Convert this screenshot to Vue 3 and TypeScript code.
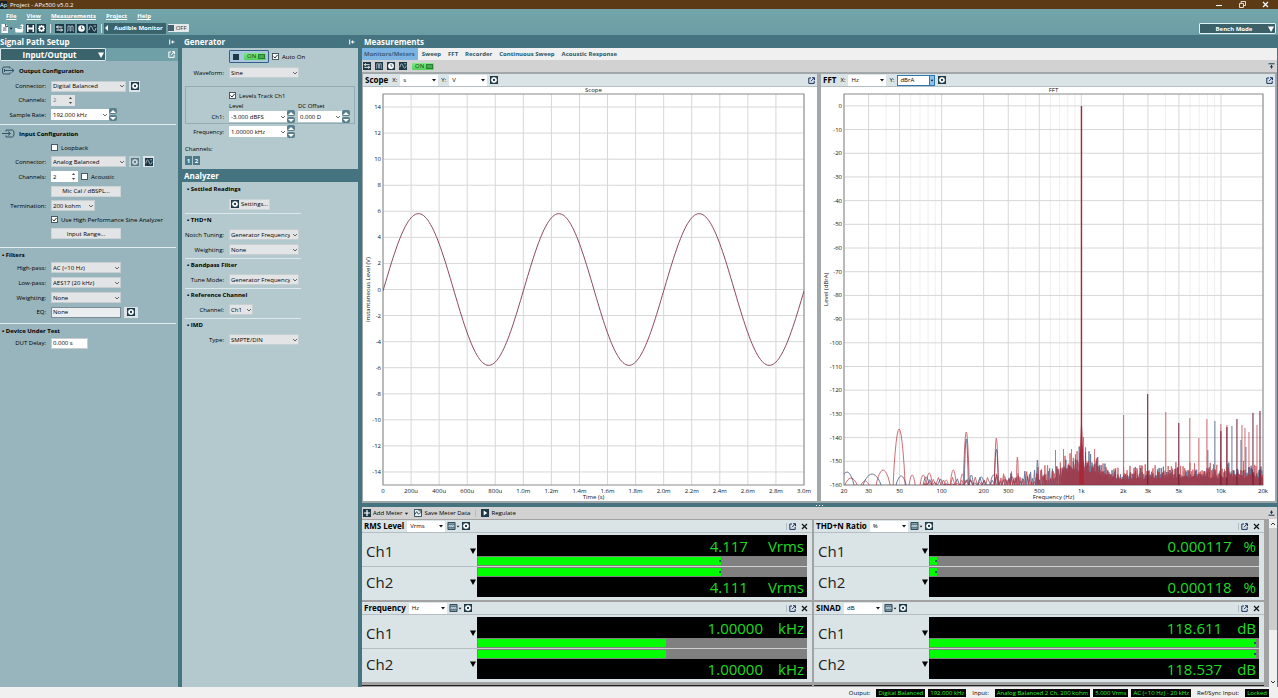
<script setup lang="ts">
interface Tick { pos: number; label: string }
interface Spike { x: number; h: number; w: number }
interface Channel { name: string; value: string; bar: number; mark: boolean }
interface Meter { title: string; unit: string; suffix: string; spacing: string; channels: Channel[] }

const menus = ['File', 'View', 'Measurements', 'Project', 'Help']
const tabs = ['Monitors/Meters', 'Sweep', 'FFT', 'Recorder', 'Continuous Sweep', 'Acoustic Response']

const filters = [
  { label: 'High-pass:', value: 'AC (<10 Hz)' },
  { label: 'Low-pass:', value: 'AES17 (20 kHz)' },
  { label: 'Weighting:', value: 'None' },
]

const analyzer = [
  { title: 'THD+N', rows: [{ label: 'Notch Tuning:', value: 'Generator Frequency' }, { label: 'Weighting:', value: 'None' }] },
  { title: 'Bandpass Filter', rows: [{ label: 'Tune Mode:', value: 'Generator Frequency' }] },
  { title: 'Reference Channel', rows: [{ label: 'Channel:', value: 'Ch1' }] },
  { title: 'IMD', rows: [{ label: 'Type:', value: 'SMPTE/DIN' }] },
]

const meters: Meter[] = [
  { title: 'RMS Level', unit: 'Vrms', suffix: 'Vrms', spacing: 'loose', channels: [{ name: 'Ch1', value: '4.117', bar: 74, mark: true }, { name: 'Ch2', value: '4.111', bar: 74, mark: true }] },
  { title: 'THD+N Ratio', unit: '%', suffix: '%', spacing: 'tight', channels: [{ name: 'Ch1', value: '0.000117', bar: 2, mark: true }, { name: 'Ch2', value: '0.000118', bar: 2, mark: true }] },
  { title: 'Frequency', unit: 'Hz', suffix: 'kHz', spacing: 'normal', channels: [{ name: 'Ch1', value: '1.00000', bar: 57, mark: false }, { name: 'Ch2', value: '1.00000', bar: 57, mark: false }] },
  { title: 'SINAD', unit: 'dB', suffix: 'dB', spacing: 'normal', channels: [{ name: 'Ch1', value: '118.611', bar: 99, mark: true }, { name: 'Ch2', value: '118.537', bar: 99, mark: true }] },
]

const status = [
  { label: 'Output:', values: ['Digital Balanced', '192.000 kHz'] },
  { label: 'Input:', values: ['Analog Balanced 2 Ch, 200 kohm', '5.000 Vrms', 'AC (<10 Hz) - 20 kHz'] },
  { label: 'Ref/Sync Input:', values: ['Locked'] },
]

/* Scope axes and sine trace */
const scopeX: Tick[] = Array.from({ length: 16 }, (_, i) => ({
  pos: (i / 15) * 100,
  label: i === 0 ? '0' : i < 5 ? `${i * 200}u` : `${(i / 5).toFixed(1)}m`,
}))
const scopeY: Tick[] = Array.from({ length: 15 }, (_, i) => {
  const v = 14 - i * 2
  return { pos: ((15 - v) / 30) * 100, label: String(v) }
})
const sine = 'M' + Array.from({ length: 301 }, (_, i) => {
  const t = i / 100
  return `${((t / 3) * 1000).toFixed(1)} ${(500 - (5.82 / 30) * 1000 * Math.sin(2 * Math.PI * (t - 0.003))).toFixed(1)}`
}).join('L')

/* FFT axes, log frequency from 20 Hz to 20 kHz */
const logPos = (f: number): number => (Math.log10(f / 20) / 3) * 100
const fftX: Tick[] = [20, 30, 50, 100, 200, 300, 500, 1000, 2000, 3000, 5000, 10000, 20000].map(f => ({
  pos: logPos(f),
  label: f < 1000 ? String(f) : `${f / 1000}k`,
}))
const fftMinor: number[] = [10, 100, 1000, 10000]
  .flatMap(d => [4, 6, 7, 8, 9].map(m => m * d))
  .filter(f => f > 20 && f < 20000)
  .map(logPos)
const fftY: Tick[] = Array.from({ length: 17 }, (_, i) => ({ pos: ((5 + i * 10) / 165) * 100, label: String(-i * 10) }))

/* FFT traces on a 418 x 391 grid, heights measured up from the floor */
const W = 418
const H = 391
const rng = (seed: number) => () => {
  seed = (seed * 1664525 + 1013904223) % 4294967296
  return seed / 4294967296
}
const hump = (s: Spike): string => {
  let d = ''
  for (let i = 0; i <= 12; i++) {
    const u = i / 6 - 1
    d += `${i ? 'L' : 'M'}${(s.x + u * s.w).toFixed(1)} ${(H - s.h * Math.pow(Math.cos((u * Math.PI) / 2), 0.8)).toFixed(1)}`
  }
  return d
}
const noise = (seed: number, gain: number): string => {
  const r = rng(seed)
  let d = `M80 ${H}`
  let x = 80
  while (x < W) {
    const near = Math.abs(x - 237)
    let h: number
    let step: number
    if (x < 150) { h = r() * 8; step = 3 + r() * 3 }
    else if (x < 190) { h = 2 + r() * 12; step = 1.6 + r() * 2 }
    else if (x < 215) { h = 3 + r() * 17; step = 1 + r() }
    else { h = 5 + r() * r() * 15 * gain; step = 0.6 + r() * 0.3 }
    if (near < 34) h += (34 - near) * 0.5 * (0.3 + r())
    if (x > 300) h += (r() * r()) * (x - 300) * 0.06 + 1
    d += `L${x.toFixed(1)} ${(H - h).toFixed(1)}L${(x + step / 2).toFixed(1)} ${H}`
    x += step
  }
  return d
}
const sp = (list: number[][]): Spike[] => list.map(([x, h, w]) => ({ x, h, w }))
const spikes = (list: number[][]): string => list.map(([x, h]) => `M${x} ${H}V${H - h}`).join('')

const redHumps = sp([[7, 7, 6], [21, 4, 4], [39, 15, 7], [55, 56, 6], [68, 10, 3], [79, 10, 3], [85, 12, 3], [102, 5, 2], [109, 15, 3], [118, 11, 2], [122, 53, 3], [152, 47, 2], [160, 9, 2], [173, 28, 1]])
const blueHumps = sp([[3, 13, 7], [28, 11, 9], [57, 9, 5], [82, 8, 3], [122, 46, 2], [127, 10, 2], [137, 8, 3], [149, 10, 3], [152, 36, 2], [193, 25, 1], [168, 8, 2]])
const redTrace = redHumps.map(hump).join('') + noise(71, 1.3) +
  spikes([[211, 35], [219, 36], [227, 36], [250, 36], [239, 48]])
const blueTrace = blueHumps.map(hump).join('') + noise(2024, 1.1) + spikes([[241, 33], [235, 38]])
const redHarmonics = spikes([[279, 70], [321, 73], [345, 67], [354, 47], [362, 66], [376, 61], [382, 60], [397, 60], [400, 57], [404, 53], [412, 60]])
const blueHarmonics = spikes([[370, 64], [387, 59], [363, 35], [396, 45], [401, 38]])
const darkHarmonics = spikes([[303, 91], [334, 62], [376, 54], [382, 58], [392, 66], [408, 72], [415, 74]])
</script>

<template>
  <div class="app">
    <svg class="defs" aria-hidden="true">
      <symbol id="chev" viewBox="0 0 6 6"><path d="M1 2l2 2 2-2" fill="none" stroke="#444" stroke-width=".8" /></symbol>
      <symbol id="caret" viewBox="0 0 6 6"><path d="M1 2h4L3 4.500z" fill="#111" /></symbol>
      <symbol id="gear" viewBox="0 0 9 9"><path d="M0 0h9v9H0z" fill="#1d3947" /><path d="M3.700 1h1.600v1L6.800 1.600 7.400 2.200 7 3.700h1v1.600H7L7.400 6.800 6.800 7.400 5.300 7v1H3.700V7L2.200 7.400 1.600 6.800 2 5.300H1V3.700h1L1.600 2.200 2.200 1.600 3.700 2z" fill="#fff" /><circle cx="4.500" cy="4.500" r="1.300" fill="#1d3947" /></symbol>
      <symbol id="route" viewBox="0 0 9 9"><path d="M0 0h9v9H0z" fill="#1d3947" /><path d="M1.500 3h6M3 1.500L1.500 3 3 4.500M1.500 6h6M6 4.500L7.500 6 6 7.500" fill="none" stroke="#fff" /></symbol>
      <symbol id="wave" viewBox="0 0 9 9"><path d="M0 0h9v9H0z" fill="#1d3947" /><path d="M1 7h1V2h2v5h1V2h2v5h1" fill="none" stroke="#b9d0dc" stroke-width=".8" /></symbol>
      <symbol id="clock" viewBox="0 0 9 9"><path d="M0 0h9v9H0z" fill="#1d3947" /><circle cx="4.500" cy="4.500" r="3.300" fill="#fff" /><path d="M4.500 2.200v2.500h1.700" fill="none" stroke="#1d3947" stroke-width=".8" /></symbol>
      <symbol id="sine" viewBox="0 0 9 9"><path d="M0 0h9v9H0z" fill="#1d3947" /><path d="M1 6c1-5 2-5 3.500-1.500S7 8 8 4M5.500 2h2.500" fill="none" stroke="#d5e4ea" stroke-width=".8" /></symbol>
      <symbol id="bars" viewBox="0 0 9 9"><path d="M.5.5h8v8h-8z" fill="#8fa9b6" stroke="#1d3947" /><path d="M1 2.500h7M1 6.500h7" stroke="#1d3947" stroke-width=".6" /><path d="M1.500 5l1-1 1 1 1-1 1 1 1-1 1 1" fill="none" stroke="#fff" stroke-width=".7" /></symbol>
      <symbol id="pop" viewBox="0 0 7 7"><path d="M3 1H.8v5.400h5.400V4M4 .7h2.500v2.500M6.300.9L3 4.200" fill="none" stroke="currentColor" /></symbol>
      <symbol id="pin" viewBox="0 0 6 6"><path d="M.7.5v5M2 3h3.500M3.600 1.500v3" fill="none" stroke="currentColor" /></symbol>
      <symbol id="dock" viewBox="0 0 7 6"><path d="M.5.800h6M3.500 2v3.500M2 3.800h3" fill="none" stroke="#1d3947" /></symbol>
      <symbol id="doc" viewBox="0 0 9 9"><path d="M1.500 0h4l2.500 2.500V9H1.500z" fill="#fff" /><path d="M3 4h3.500M3 6h3.500M5.500 0v2.500H8" stroke="#1d3947" stroke-width=".8" fill="none" /></symbol>
      <symbol id="open" viewBox="0 0 9 9"><path d="M0 4h2l1 1h5.500L7.500 8.500H.5z" fill="#fff" /><path d="M4 3.500h3V2H5L7 0l2 2H8v3" fill="#fff" /></symbol>
      <symbol id="save" viewBox="0 0 9 9"><path d="M0 0h9v9H0z" fill="#1d3947" /><path d="M1 1h7v7H1z" fill="#fff" /><path d="M2.500 1h4v2.500h-4zM2.500 5.500h4V8h-4z" fill="#1d3947" /></symbol>
      <symbol id="plus" viewBox="0 0 9 9"><path d="M0 0h9v9H0z" fill="#1d3947" /><path d="M4.500 1v7M1 4.500h7" stroke="#fff" stroke-width="1.400" /></symbol>
      <symbol id="export" viewBox="0 0 9 9"><path d="M.5.5h8v8h-8z" fill="#eef3f5" stroke="#1d3947" /><path d="M1 6l2-3 2 3 2-2M5 2h3v3" fill="none" stroke="#1d3947" /></symbol>
      <symbol id="play" viewBox="0 0 9 9"><path d="M0 0h9v9H0z" fill="#1d3947" /><path d="M3 1.800l4 2.700-4 2.700z" fill="#fff" /></symbol>
      <symbol id="tri" viewBox="0 0 6 6"><path d="M0 .5h6L3 6z" fill="currentColor" /></symbol>
      <symbol id="close" viewBox="0 0 7 7"><path d="M1 1l5 5M6 1L1 6" stroke="currentColor" stroke-width="1.200" /></symbol>
      <symbol id="port-out" viewBox="0 0 13 9"><path d="M8 2.500V1H2Q.5 1 .5 3v3q0 2 1.500 2H8V6.500M3 4.500h9M9.500 2.500l2.500 2-2.500 2M2.500 3v3" fill="none" stroke="#345566" /></symbol>
      <symbol id="port-in" viewBox="0 0 13 9"><path d="M4 2.500V1h6.500q1.500 0 1.500 3.500T10.500 8H4V6.500M0 4.500h8M6 2.500l2.500 2-2.500 2" fill="none" stroke="#345566" /></symbol>
    </svg>

    <header class="titlebar">
      <span class="logo" aria-hidden="true">Ap</span>
      <span>Project - APx500 v5.0.2</span>
      <span class="grow"></span>
      <button class="bare win" aria-label="Minimize"><svg width="7" height="7" viewBox="0 0 7 7"><path d="M0 4.500h6" stroke="#fff" /></svg></button>
      <button class="bare win" aria-label="Restore"><svg width="7" height="7" viewBox="0 0 7 7"><path d="M.5 2.500h4v4h-4zM2 2V.500h4.500v4H5" fill="none" stroke="#fff" stroke-width=".8" /></svg></button>
      <button class="bare win" aria-label="Close"><svg width="7" height="7"><use href="#close" /></svg></button>
    </header>

    <div class="topband">
      <div class="topleft">
        <nav class="menu"><a v-for="m in menus" :key="m" href="#">{{ m }}</a></nav>
        <div class="toolbar">
          <button class="bare" aria-label="New"><svg width="9" height="9"><use href="#doc" /></svg><svg width="4" height="5"><use href="#caret" /></svg></button>
          <button class="bare" aria-label="Open"><svg width="9" height="9"><use href="#open" /></svg></button>
          <button class="bare" aria-label="Save"><svg width="9" height="9"><use href="#save" /></svg></button>
          <button class="bare" aria-label="Settings"><svg width="9" height="9"><use href="#gear" /></svg></button>
          <i class="vsep"></i>
          <button v-for="n in ['route', 'wave', 'clock', 'sine']" :key="n" class="bare" :aria-label="n"><svg width="9" height="9"><use :href="'#' + n" /></svg></button>
          <i class="vsep"></i>
          <button class="audible"><svg width="5" height="6" viewBox="0 0 5 6"><path d="M4 0v6L1 3z" fill="#fff" /></svg>Audible Monitor</button>
          <button class="offswitch"><i></i>OFF</button>
        </div>
      </div>
      <button class="bench"><span>Bench Mode</span><svg width="6" height="6"><use href="#tri" /></svg></button>
    </div>

    <main class="body">
      <aside class="signal">
        <h2 class="head">Signal Path Setup<button class="bare" aria-label="Collapse"><svg width="6" height="6"><use href="#pin" /></svg></button></h2>
        <div class="iobar">
          <button class="io"><span>Input/Output</span><svg width="6" height="6"><use href="#tri" /></svg></button>
          <button class="bare" aria-label="Pop out"><svg width="7" height="7"><use href="#pop" /></svg></button>
        </div>

        <section class="sec tall first">
          <h3><svg width="13" height="9"><use href="#port-out" /></svg>Output Configuration</h3>
          <div class="row mid"><label for="oc">Connector:</label><span class="sel w75"><select id="oc"><option>Digital Balanced</option></select><svg><use href="#chev" /></svg></span><button class="tool" aria-label="Output settings"><svg width="9" height="9"><use href="#gear" /></svg></button></div>
          <div class="row mid"><label for="och">Channels:</label><span class="num dim"><input id="och" value="2" disabled><svg width="5" height="9" viewBox="0 0 5 9"><path d="M1 3l1.500-2L4 3zM1 6l1.500 2L4 6z" fill="#444" /></svg></span></div>
          <div class="row"><label for="osr">Sample Rate:</label><span class="sel edit w58"><input id="osr" value="192.000 kHz"><svg><use href="#chev" /></svg></span><span class="spin"><button aria-label="Up"></button><button aria-label="Down"></button></span></div>
        </section>

        <section class="sec tall">
          <h3><svg width="13" height="9"><use href="#port-in" /></svg>Input Configuration</h3>
          <div class="row short"><span></span><label class="check"><input type="checkbox">Loopback</label></div>
          <div class="row"><label for="ic">Connector:</label><span class="sel w75"><select id="ic"><option>Analog Balanced</option></select><svg><use href="#chev" /></svg></span><button class="tool faded" aria-label="Input settings"><svg width="9" height="9"><use href="#gear" /></svg></button><button class="tool" aria-label="Meter"><svg width="9" height="9"><use href="#sine" /></svg></button></div>
          <div class="row"><label for="ich">Channels:</label><span class="num"><input id="ich" value="2"><svg width="5" height="9" viewBox="0 0 5 9"><path d="M1 3l1.500-2L4 3zM1 6l1.500 2L4 6z" fill="#444" /></svg></span><label class="check"><input type="checkbox">Acoustic</label></div>
          <div class="row mid"><span></span><button class="btn w70">Mic Cal / dBSPL...</button></div>
          <div class="row"><label for="it">Termination:</label><span class="sel w44"><select id="it"><option>200 kohm</option></select><svg><use href="#chev" /></svg></span></div>
          <div class="row short"><span></span><label class="check"><input type="checkbox" checked>Use High Performance Sine Analyzer</label></div>
          <div class="row"><span></span><button class="btn w70">Input Range...</button></div>
        </section>

        <section class="sec">
          <h3>• Filters</h3>
          <div v-for="f in filters" :key="f.label" class="row"><label :for="f.label">{{ f.label }}</label><span class="sel w70"><select :id="f.label"><option>{{ f.value }}</option></select><svg><use href="#chev" /></svg></span></div>
          <div class="row mid"><label for="eq">EQ:</label><input id="eq" class="box w70 eq" value="None"><button class="tool wide" aria-label="Edit EQ"><svg width="9" height="9"><use href="#gear" /></svg></button></div>
        </section>

        <section class="sec last">
          <h3>• Device Under Test</h3>
          <div class="row mid"><label for="dut">DUT Delay:</label><input id="dut" class="box w37" value="0.000 s"></div>
        </section>
      </aside>

      <aside class="gen">
        <h2 class="head">Generator<button class="bare" aria-label="Collapse"><svg width="6" height="6"><use href="#pin" /></svg></button></h2>
        <div class="pane generator">
          <div class="row onrow"><span></span><button class="onbox"><i class="sq"></i><span class="on">ON<i></i></span></button><label class="check"><input type="checkbox" checked>Auto On</label></div>
          <div class="row"><label for="wf">Waveform:</label><span class="sel w70"><select id="wf"><option>Sine</option></select><svg><use href="#chev" /></svg></span></div>
          <fieldset class="levels">
            <div class="row short"><span></span><label class="check"><input type="checkbox" checked>Levels Track Ch1</label></div>
            <div class="row labels"><span></span><label for="lv" class="w66">Level</label><label for="dc">DC Offset</label></div>
            <div class="row short"><label for="lv">Ch1:</label><span class="sel edit w58"><input id="lv" value="-3.000 dBFS"><svg><use href="#chev" /></svg></span><span class="spin"><button aria-label="Up"></button><button aria-label="Down"></button></span><span class="sel edit w44"><input id="dc" value="0.000 D"><svg><use href="#chev" /></svg></span><span class="spin"><button aria-label="Up"></button><button aria-label="Down"></button></span></div>
          </fieldset>
          <div class="row"><label for="fr">Frequency:</label><span class="sel edit w58"><input id="fr" value="1.00000 kHz"><svg><use href="#chev" /></svg></span><span class="spin"><button aria-label="Up"></button><button aria-label="Down"></button></span></div>
          <p class="chtext">Channels:</p>
          <div class="chans"><button>1</button><button>2</button></div>
        </div>
        <h2 class="head">Analyzer</h2>
        <div class="pane analyzer">
          <section class="asec"><h3>• Settled Readings</h3><div class="row settings"><span></span><button class="btn pad"><svg width="8" height="8"><use href="#gear" /></svg>Settings...</button></div></section>
          <section v-for="s in analyzer" :key="s.title" class="asec">
            <h3>• {{ s.title }}</h3>
            <div v-for="r in s.rows" :key="r.label" class="row"><label :for="s.title + r.label">{{ r.label }}</label><span class="sel" :class="r.value === 'Ch1' ? 'w24' : 'w70'"><select :id="s.title + r.label"><option>{{ r.value }}</option></select><svg><use href="#chev" /></svg></span></div>
          </section>
        </div>
      </aside>

      <section class="meas">
        <h2 class="head">Measurements</h2>
        <nav class="tabs"><a v-for="(t, i) in tabs" :key="t" href="#" :class="{ active: i === 0 }">{{ t }}</a></nav>
        <div class="mtools">
          <button v-for="n in ['route', 'wave', 'clock', 'sine']" :key="n" class="bare" :aria-label="n"><svg width="8" height="8"><use :href="'#' + n" /></svg></button>
          <button class="on">ON<i></i></button>
          <span class="grow"></span>
          <button class="bare" aria-label="Dock"><svg width="7" height="6"><use href="#dock" /></svg></button>
        </div>

        <div class="graphs">
          <article class="graph">
            <header class="ghead">
              <h3>Scope</h3>
              <label for="sx">X:</label><span class="sel flat w38"><select id="sx"><option>s</option></select><svg><use href="#caret" /></svg></span>
              <label for="sy">Y:</label><span class="sel flat w38"><select id="sy"><option>V</option></select><svg><use href="#caret" /></svg></span>
              <button class="bare" aria-label="Settings"><svg width="8" height="8"><use href="#gear" /></svg></button>
              <span class="grow"></span>
              <button class="bare" aria-label="Pop out"><svg width="7" height="7"><use href="#pop" /></svg></button>
            </header>
            <div class="plot">
              <svg class="chart" width="100%" height="100%">
                <g class="grid">
                  <line v-for="t in scopeX" :key="'x' + t.label" :x1="t.pos + '%'" :x2="t.pos + '%'" y1="0" y2="100%" />
                  <line v-for="t in scopeY" :key="'y' + t.label" x1="0" x2="100%" :y1="t.pos + '%'" :y2="t.pos + '%'" />
                </g>
                <rect class="frame" width="100%" height="100%" />
                <svg viewBox="0 0 1000 1000" preserveAspectRatio="none" width="100%" height="100%"><path class="sine" :d="sine" /></svg>
                <text x="50%" y="-2" text-anchor="middle" class="title">Scope</text>
                <text v-for="t in scopeX" :key="'a' + t.label" :x="t.pos + '%'" y="100%" dy="8" text-anchor="middle">{{ t.label }}</text>
                <text v-for="t in scopeY" :key="'b' + t.label" x="-2" :y="t.pos + '%'" dy="2" text-anchor="end">{{ t.label }}</text>
                <text x="50%" y="100%" dy="14" text-anchor="middle">Time (s)</text>
              </svg>
              <span class="yname">Instantaneous Level (V)</span>
            </div>
          </article>

          <article class="graph fft">
            <header class="ghead">
              <h3>FFT</h3>
              <label for="fx">X:</label><span class="sel flat w38"><select id="fx"><option>Hz</option></select><svg><use href="#caret" /></svg></span>
              <label for="fy">Y:</label><span class="sel flat focus w38"><select id="fy"><option>dBrA</option></select><svg><use href="#caret" /></svg></span>
              <button class="bare" aria-label="Settings"><svg width="8" height="8"><use href="#gear" /></svg></button>
              <span class="grow"></span>
              <button class="bare" aria-label="Pop out"><svg width="7" height="7"><use href="#pop" /></svg></button>
            </header>
            <div class="plot">
              <svg class="chart" width="100%" height="100%">
                <g class="grid minor"><line v-for="p in fftMinor" :key="p" :x1="p + '%'" :x2="p + '%'" y1="0" y2="100%" /></g>
                <g class="grid">
                  <line v-for="t in fftX" :key="'x' + t.label" :x1="t.pos + '%'" :x2="t.pos + '%'" y1="0" y2="100%" />
                  <line v-for="t in fftY" :key="'y' + t.label" x1="0" x2="100%" :y1="t.pos + '%'" :y2="t.pos + '%'" />
                </g>
                <rect class="frame" width="100%" height="100%" />
                <svg viewBox="0 0 418 391" preserveAspectRatio="none" width="100%" height="100%">
                  <path class="blue" :d="blueTrace + blueHarmonics" />
                  <path class="red" :d="redTrace + redHarmonics" />
                  <path class="dark" :d="darkHarmonics" />
                  <path class="peak" d="M234.500 391L236.200 330 236.200 12 237.600 12 237.600 330 239.500 391z" />
                </svg>
                <text x="50%" y="-2" text-anchor="middle" class="title">FFT</text>
                <text v-for="t in fftX" :key="'a' + t.label" :x="t.pos + '%'" y="100%" dy="8" text-anchor="middle">{{ t.label }}</text>
                <text v-for="t in fftY" :key="'b' + t.label" x="-2" :y="t.pos + '%'" dy="2" text-anchor="end">{{ t.label }}</text>
                <text x="50%" y="100%" dy="14" text-anchor="middle">Frequency (Hz)</text>
              </svg>
              <span class="yname">Level (dBrA)</span>
            </div>
          </article>
        </div>

        <div class="splitter"><i></i><i></i><i></i></div>
        <div class="mtools meterbar">
          <button class="bare txt"><svg width="8" height="8"><use href="#plus" /></svg>Add Meter<svg width="5" height="5"><use href="#caret" /></svg></button>
          <button class="bare txt"><svg width="8" height="8"><use href="#export" /></svg>Save Meter Data</button>
          <i class="vline"></i>
          <button class="bare txt"><svg width="8" height="8"><use href="#play" /></svg>Regulate</button>
          <span class="grow"></span>
          <button class="bare flip" aria-label="Dock"><svg width="7" height="6"><use href="#dock" /></svg></button>
        </div>

        <div class="meterarea">
          <div class="meters">
            <article v-for="m in meters" :key="m.title" class="meter">
              <header class="ghead mh">
                <h3>{{ m.title }}</h3>
                <span class="sel flat w38"><select :aria-label="m.title + ' unit'"><option>{{ m.unit }}</option></select><svg><use href="#caret" /></svg></span>
                <button class="bare" aria-label="Bars"><svg width="9" height="8"><use href="#bars" /></svg><svg width="4" height="5"><use href="#caret" /></svg></button>
                <button class="bare" aria-label="Settings"><svg width="8" height="8"><use href="#gear" /></svg></button>
                <span class="grow"></span>
                <i class="vline"></i>
                <button class="bare" aria-label="Pop out"><svg width="7" height="7"><use href="#pop" /></svg></button>
                <button class="bare x" aria-label="Close"><svg width="7" height="7"><use href="#close" /></svg></button>
              </header>
              <div class="mbody">
                <div v-for="(c, i) in m.channels" :key="c.name" class="chan" :class="{ second: i === 1 }">
                  <div class="cname"><span>{{ c.name }}</span><svg width="6" height="6"><use href="#tri" /></svg></div>
                  <div class="readout">
                    <div class="val" :class="m.spacing"><span>{{ c.value }}</span><span>{{ m.suffix }}</span></div>
                    <div class="track"><div class="fill" :style="{ width: c.bar + '%' }"><i v-if="c.mark"></i></div></div>
                  </div>
                </div>
              </div>
            </article>
            <div class="next"></div>
            <div class="next"></div>
          </div>
          <div class="scroll"><svg width="6" height="6" viewBox="0 0 6 6"><path d="M1 4l2-2 2 2" fill="none" stroke="#333" /></svg><i></i><span class="grow"></span><svg width="6" height="6" viewBox="0 0 6 6"><path d="M1 2l2 2 2-2" fill="none" stroke="#333" /></svg></div>
        </div>
      </section>
    </main>

    <footer class="status">
      <template v-for="s in status" :key="s.label"><span class="slabel">{{ s.label }}</span><b v-for="v in s.values" :key="v">{{ v }}</b></template>
    </footer>
  </div>
</template>

<style>
html, body { margin: 0; overflow: hidden; }
</style>

<style scoped>
* { box-sizing: border-box; }
.app { display: flex; flex-direction: column; height: 100vh; font-family: "Open Sans", "Noto Sans", sans-serif; font-size: 6px; line-height: 8px; color: #000; background: #457380; }
button, input, select { font: inherit; color: inherit; margin: 0; padding: 0; border: 0; border-radius: 0; }
h2, h3, p { margin: 0; font-size: 8px; font-weight: 700; }
svg { flex: none; display: block; }
.defs { position: absolute; width: 0; height: 0; }
.grow { flex: 1; }
.bare { display: flex; align-items: center; gap: 2px; background: none; }
.titlebar { display: flex; align-items: center; height: 9px; background: #5b3a15; color: #fff; font-size: 6px; padding-right: 9px; }
.logo { width: 7px; height: 8px; margin-right: 3px; background: #17242c; font-size: 6px; line-height: 8px; overflow: hidden; }
.win { margin-left: 16px; }
.topband { display: flex; justify-content: space-between; align-items: flex-start; height: 26px; background: linear-gradient(#73a6ab, #6b9da4); }
.menu { display: flex; gap: 10px; padding: 3px 6px 0; }
.menu a { color: #fff; font-weight: 700; }
.toolbar { display: flex; align-items: center; gap: 2px; height: 12px; margin-top: 2px; }
.toolbar .bare { gap: 0; }
.vsep { width: 1px; height: 9px; margin: 0 2px; background: #dbe8ea; }
.vsep + .audible { margin-left: -2px; }
.audible { display: flex; align-items: center; gap: 5px; height: 11px; padding: 0 3px 0 0; background: #3b636c; color: #fff; font-weight: 700; }
.offswitch { display: flex; align-items: center; gap: 2px; height: 8px; padding-right: 2px; border-radius: 1px; background: #e3eaec; color: #333; line-height: 8px; }
.offswitch i { width: 6px; height: 6px; background: #44606c; }
.bench { display: flex; align-items: center; width: 77px; height: 11px; margin: 14px 2px 0 0; padding-right: 1px; background: #3b6068; color: #fff; border: 1px solid #dff0f2; border-radius: 1px; font-weight: 700; }
.bench span, .io span { flex: 1; }
.body { flex: 1; min-height: 0; display: grid; grid-template-columns: 178px 176px minmax(0, 1fr); column-gap: 4px; padding-right: 1px; }
.head { display: flex; align-items: center; justify-content: space-between; height: 13px; padding: 0 3px 0 2px; color: #fff; background: #457380; line-height: 12px; }
.signal { background: #98b4bc; }
.signal .head { padding: 0 3px 0 0; }
.iobar { display: flex; align-items: center; justify-content: space-between; height: 13px; padding: 0 3px 0 0; background: #6fa0a7; color: #fff; }
.io { display: flex; align-items: center; width: 106px; height: 13px; padding-right: 1px; border: 1px solid #d9e8ea; border-radius: 1px; background: #3b636c; color: #fff; font-size: 8px; font-weight: 700; }
.sec { padding-bottom: 4px; border-bottom: 1px solid #e3edf0; margin-right: 2px; }
.sec h3 { display: flex; align-items: center; gap: 4px; height: 12px; padding: 2px 0 0 2px; font-size: 6px; }
.tall { padding-bottom: 6px; }
.sec.tall h3 { height: 16px; padding-top: 1px; }
.sec.first { padding-bottom: 2px; }
.sec.first h3 { height: 18px; }
.last { border-bottom: 0; }
.row { display: flex; align-items: center; gap: 3px; height: 15px; }
.row > :first-child { width: 46px; flex: none; text-align: right; margin-right: 2px; white-space: nowrap; }
.mid { height: 14px; }
.short { height: 13px; }
.w24 { width: 24px; } .w37 { width: 37px; } .w38 { width: 38px; } .w44 { width: 44px; } .w58 { width: 58px; } .w66 { width: 66px; } .w70 { width: 70px; } .w75 { width: 75px; }
.sel { display: grid; align-items: center; height: 11px; }
.sel > * { grid-area: 1 / 1; }
.sel select, .sel input { appearance: none; width: 100%; height: 11px; padding: 0 8px 0 1px; border: 1px solid #c6ced2; background: #e2e4e6; outline: 0; }
.sel > svg { width: 6px; height: 6px; justify-self: end; margin-right: 1px; pointer-events: none; }
.sel.edit input { padding: 0 0 0 1px; background: #fff; border-color: #fff; }
.sel.flat select { background: #fff; border-color: #fff; }
.num { display: flex; align-items: center; width: 27px; height: 11px; background: #fff; }
.num input { width: 20px; height: 10px; padding-left: 2px; background: none; }
.dim { width: 24px; background: #e2e4e6; }
.dim input { width: 17px; color: #778; }
.box { height: 11px; padding: 0 1px; background: #fff; border: 1px solid #c6ced2; }
.eq { background: #ebeef0; border-color: #7d8c94; }
.btn { display: flex; align-items: center; justify-content: center; gap: 2px; height: 11px; background: #e2e4e6; border: 1px solid #cdd5d8; }
.pad { padding: 0 1px; }
.tool { display: flex; align-items: center; justify-content: center; width: 11px; height: 11px; background: #dbe3e6; }
.tool svg { width: 8px; height: 8px; }
.wide { width: 14px; }
.faded { opacity: .5; }
.check { display: flex; align-items: center; gap: 3px; white-space: nowrap; }
.check input { appearance: none; width: 7px; height: 7px; background: #fff; border: 1px solid #4a5a62; }
.check input:checked { background: #fff url("data:image/svg+xml,%3Csvg xmlns='http://www.w3.org/2000/svg' viewBox='0 0 5 5'%3E%3Cpath d='M.5 2.500l1.500 1.500L4.500 1' fill='none' stroke='%23111' stroke-width='.9'/%3E%3C/svg%3E"); }
.spin { display: grid; gap: 1px; width: 8px; height: 13px; margin-left: -3px; }
.spin button { background: #5a7f8c; border-radius: 2px; }
.spin button::after { content: ""; display: block; width: 0; height: 0; margin: 0 auto; border: 3px solid transparent; border-top: 0; border-bottom: 3px solid #fff; }
.spin button + button::after { border-top: 3px solid #fff; border-bottom: 0; }
.pane { background: #b3c9ce; padding: 0 3px; }
.gen { display: flex; flex-direction: column; }
.gen .row > :first-child { width: 39px; }
.generator { padding-bottom: 4px; }
.onrow { height: 17px; }
.onbox { display: flex; align-items: center; justify-content: space-between; width: 40px; height: 13px; padding: 0 2px; border: 1px solid #345e86; background: #a9c8de; border-radius: 1px; }
.sq { width: 6px; height: 6px; margin-left: 1px; background: #1d3947; }
.on { display: flex; align-items: center; gap: 2px; width: 22px; height: 7px; padding-left: 3px; border-radius: 1px; background: linear-gradient(#7fe884, #52cf58); color: #083c10; line-height: 7px; }
.on i { width: 7px; height: 5px; background: #43a94a; border: 1px solid #2c7f35; }
.levels { margin: 6px 0 0; padding: 2px 0 0; border: 1px solid #93abb2; min-width: 0; }
.levels .row > :first-child { width: 38px; }
.levels .labels { height: 8px; }
.levels .short { height: 13px; }
.chtext { font-size: 6px; font-weight: 400; margin-top: 6px; }
.chans { display: flex; gap: 1px; margin-top: 3px; }
.chans button { width: 7px; height: 9px; background: #4d7a8a; color: #fff; font-weight: 700; line-height: 8px; }
.analyzer { flex: 1; padding-top: 1px; }
.asec { width: 116px; padding-bottom: 1px; border-bottom: 1px solid #dce9ec; }
.asec:last-child { border-bottom: 0; }
.asec h3 { height: 13px; padding-left: 2px; font-size: 6px; line-height: 13px; }
.asec .row.settings { height: 16px; }
.meas { min-width: 0; min-height: 0; display: flex; flex-direction: column; background: #457380; }
.tabs { display: flex; align-items: stretch; gap: 1px; height: 12px; background: #f0f0f0; }
.tabs a { padding: 0 3px; color: #2b5665; font-weight: 700; line-height: 12px; text-decoration: none; }
.tabs .active { background: #7cb4e4; color: #41617a; padding-left: 2px; }
.mtools { display: flex; align-items: center; gap: 4px; height: 12px; padding: 0 2px 0 1px; background: #d2d2d2; }
.mtools .on { margin-left: 1px; }
.graphs { flex: 1; min-height: 0; display: grid; grid-template-columns: 1fr 1fr; gap: 2px; padding: 1px 1px 1px 0; background: #a2a7aa; }
.graph { display: flex; flex-direction: column; min-width: 0; background: #fff; border: 1px solid #a2a7aa; }
.ghead { display: flex; align-items: center; height: 13px; gap: 3px; padding: 0 2px 0 2px; background: #dae4e7; border-bottom: 1px solid #b5bfc3; color: #1d3060; }
.ghead h3, .ghead label, .ghead select { color: #000; }
.ghead h3 { padding-right: 1px; }
.sel.flat select { padding-left: 2px; }
.sel.focus select { border: 1px solid #2f78b8; }
.focus > svg { width: 6px; height: 11px; margin: 0; background: #8fc0ea; border: 1px solid #2f78b8; }
.plot { flex: 1; min-height: 0; position: relative; padding: 7px 13px 16px 20px; display: flex; }
.fft .plot { padding-left: 23px; padding-right: 12px; }
.chart { overflow: visible; }
.chart text { font-size: 6px; fill: #111; }
.grid line { stroke: #d7d7da; stroke-width: 1; }
.minor line { stroke: #efeff1; }
.frame { fill: none; stroke: #8a8a8a; }
.sine { fill: none; stroke: #8c4a58; stroke-width: 1; vector-effect: non-scaling-stroke; }
.blue, .red, .dark { fill: none; stroke-width: 1; vector-effect: non-scaling-stroke; stroke-linejoin: bevel; }
.blue { stroke: #2c4470; opacity: .7; }
.red { stroke: #b9202c; opacity: .65; }
.dark { stroke: #6d1830; }
.peak { fill: #a8283a; }
.yname { position: absolute; left: 1px; top: 0; bottom: 9px; writing-mode: vertical-rl; transform: rotate(180deg); text-align: center; color: #111; }
.splitter { display: flex; align-items: center; justify-content: center; gap: 2px; height: 4px; }
.splitter i { width: 1px; height: 1px; background: #fff; }
.meterbar { gap: 5px; }
.vline { width: 1px; height: 7px; background: #b3bcc0; }
.flip { transform: scaleY(-1); }
.meterarea { display: flex; height: 168px; background: #a2a2a2; overflow: hidden; }
.meters { flex: 1; display: grid; grid-template-columns: 1fr 1fr; grid-auto-rows: min-content; gap: 2px; padding: 1px 5px 0 0; }
.meter { background: #dae4e7; min-width: 0; height: 80px; }
.mh { gap: 2px; padding-right: 4px; }
.mh .bare { gap: 0; }
.mh .x { margin-left: 3px; color: #111; }
.mbody { padding: 2px 5px 3px 0; }
.chan { display: grid; grid-template-columns: 115px minmax(0, 1fr); height: 31px; }
.cname { display: flex; align-items: center; justify-content: space-between; padding: 0 1px 0 4px; font-size: 15px; line-height: 20px; color: #222; }
.cname svg { color: #000; }
.chan + .chan .cname { border-top: 1px solid #b5bfc3; }
.readout { display: flex; flex-direction: column; background: #000; }
.second .readout { flex-direction: column-reverse; border-top: 1px solid #cfcfcf; }
.val { flex: 1; display: flex; align-items: center; justify-content: flex-end; padding-right: 3px; color: #1edb22; font-size: 15px; line-height: 20px; }
.loose { gap: 20px; }
.normal { gap: 15px; }
.tight { gap: 12px; }
.track { height: 10px; padding: 1px 0 1px 1px; background: #808080; }
.fill { display: flex; align-items: center; justify-content: flex-end; height: 8px; background: #00ff00; }
.fill i { width: 2px; height: 2px; background: #064; }
.next { height: 4px; border-top: 1px solid #222; margin-top: 1px; }
.scroll { display: flex; flex-direction: column; align-items: center; width: 8px; padding: 2px 0; background: #f0f0f0; }
.scroll i { width: 8px; height: 102px; margin-top: 1px; background: #cdcdcd; }
.status { display: flex; align-items: center; justify-content: flex-end; gap: 3px; height: 11px; padding-right: 9px; background: #f0f0f0; white-space: nowrap; }
.status b { padding: 0 2px; background: #000; color: #2df531; font-weight: 400; line-height: 8px; }
.slabel { padding: 0 3px; }
</style>
